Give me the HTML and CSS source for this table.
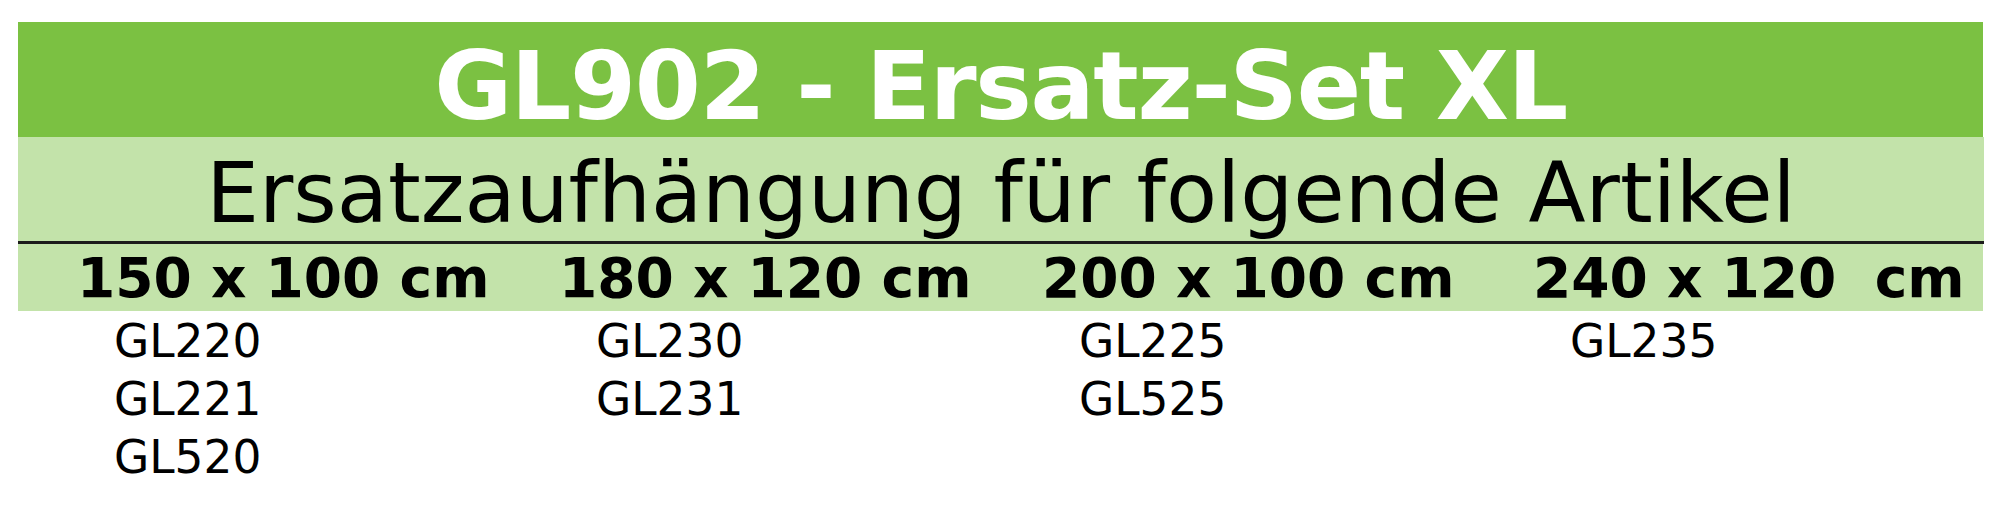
FILE: index.html
```html
<!DOCTYPE html>
<html lang="de">
<head>
<meta charset="utf-8">
<title>GL902 - Ersatz-Set XL</title>
<link rel="stylesheet" href="styles.css">
</head>
<body>
<div class="sheet">
  <h1 class="title">GL902 - Ersatz-Set XL</h1>
  <h2 class="subtitle">Ersatzaufhängung für folgende Artikel</h2>
  <div class="sizes">
    <div class="size">150 x 100 cm</div>
    <div class="size">180 x 120 cm</div>
    <div class="size">200 x 100 cm</div>
    <div class="size">240 x 120  cm</div>
  </div>
  <div class="items">
    <ul class="list">
      <li>GL220</li>
      <li>GL221</li>
      <li>GL520</li>
    </ul>
    <ul class="list">
      <li>GL230</li>
      <li>GL231</li>
    </ul>
    <ul class="list">
      <li>GL225</li>
      <li>GL525</li>
    </ul>
    <ul class="list">
      <li>GL235</li>
    </ul>
  </div>
</div>
</body>
</html>
```

FILE: styles.css
```css
html, body {
  margin: 0;
  padding: 0;
  background: #ffffff;
}

body {
  font-family: "DejaVu Sans", Verdana, sans-serif;
  color: #000000;
}

.sheet {
  margin: 22px 0 0 18px;
  width: 1965px;
}

.title {
  margin: 0;
  background: #7bc142;
  color: #ffffff;
  font-weight: bold;
  font-size: 95px;
  letter-spacing: -1.3px;
  line-height: 102px;
  padding-top: 13px;
  text-align: center;
}

.subtitle {
  margin: 0;
  background: #c3e3aa;
  font-weight: normal;
  font-size: 83.5px;
  line-height: 96px;
  padding-top: 8px;
  text-align: center;
  border-bottom: 3px solid #1c1c1c;
  margin-right: -1px;
}

.sizes {
  display: grid;
  grid-template-columns: 482px 483px 491px 1fr;
  background: #c3e3aa;
  padding: 2px 0 0 59px;
  font-weight: bold;
  font-size: 55px;
  line-height: 65px;
}

.size {
  white-space: pre;
}

.items {
  display: grid;
  grid-template-columns: 482px 483px 491px 1fr;
  padding: 2px 0 0 96px;
}

.list {
  list-style: none;
  margin: 0;
  padding: 0;
  font-size: 45.5px;
  line-height: 58px;
}
```
